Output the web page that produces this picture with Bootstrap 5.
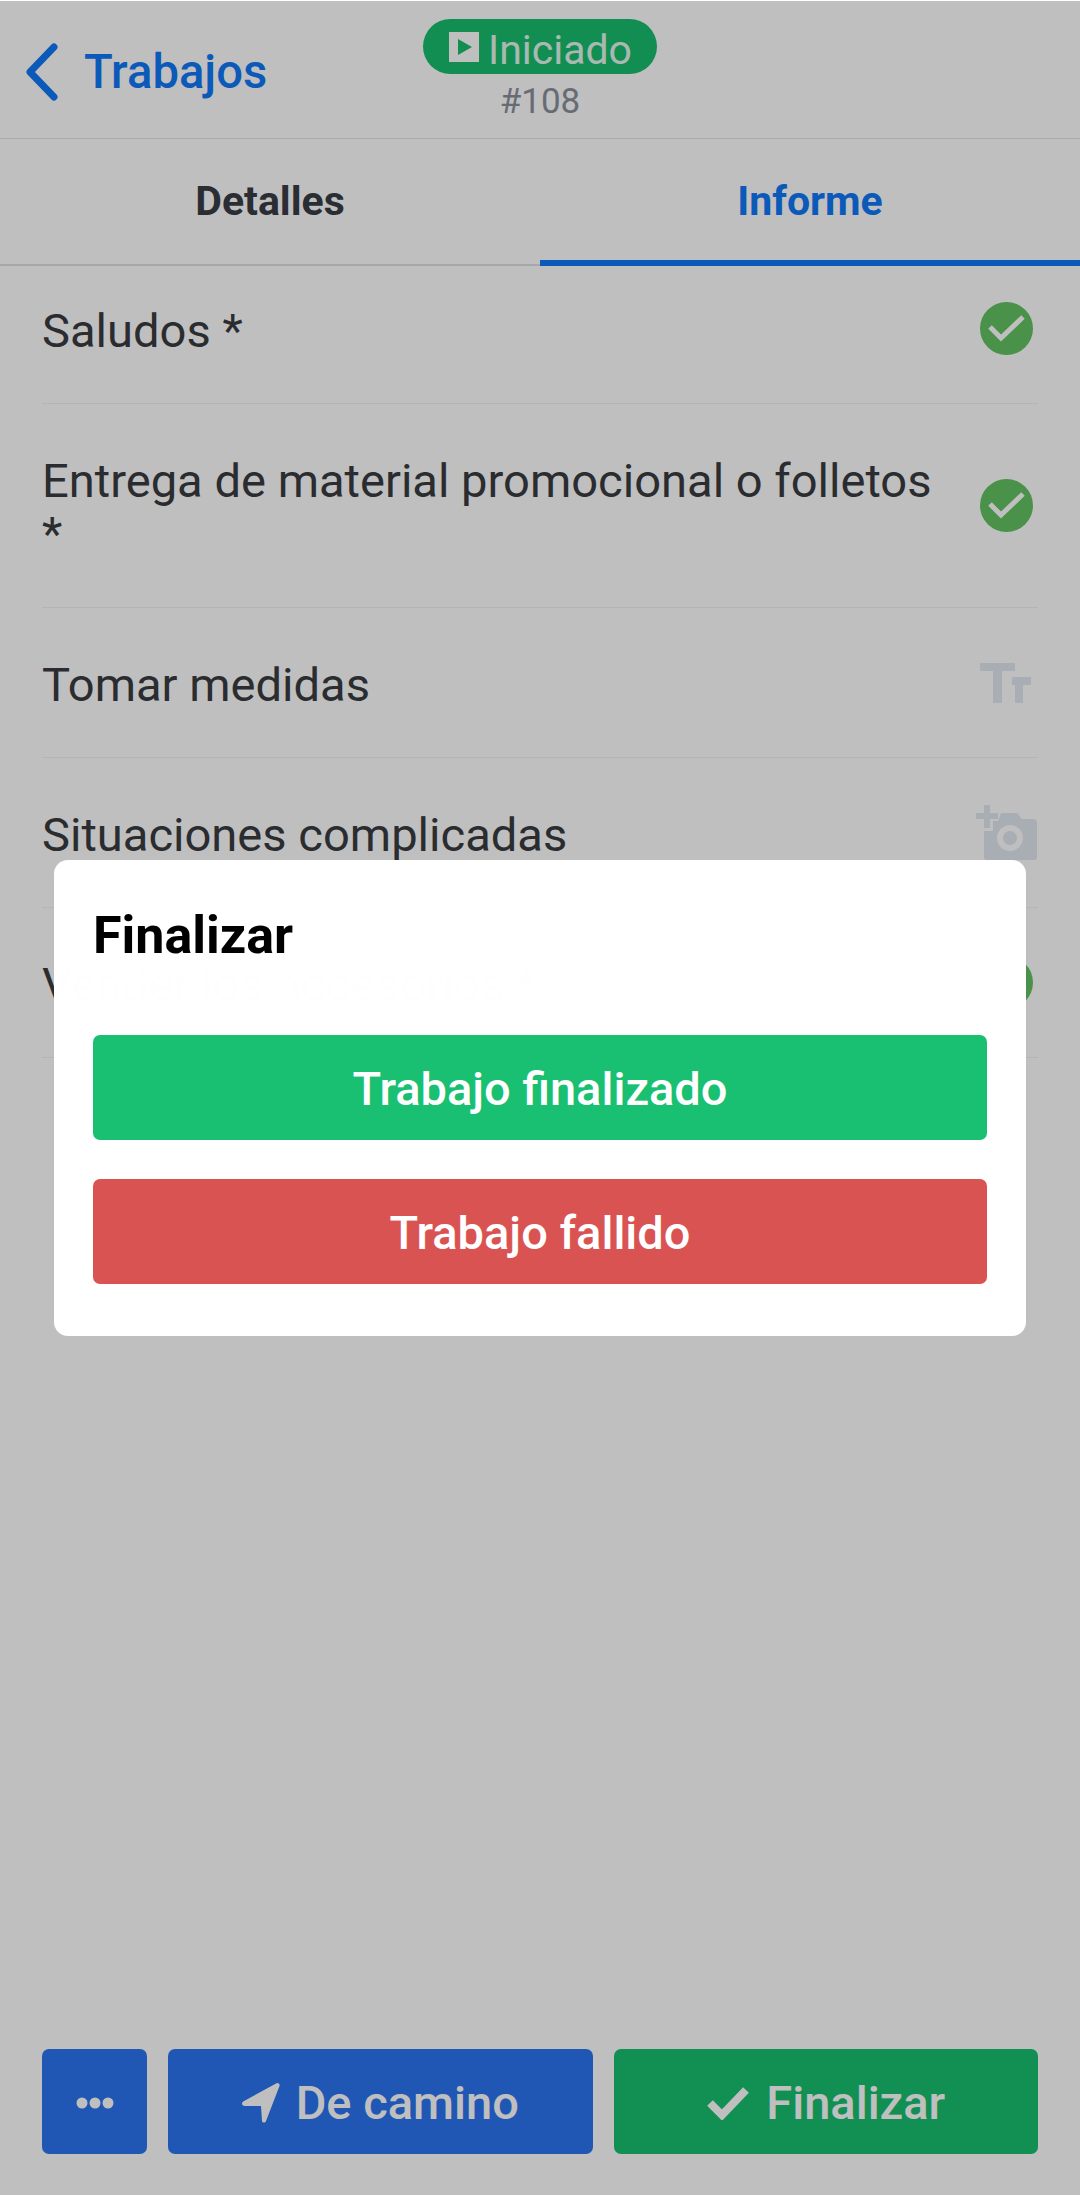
<!DOCTYPE html>
<html lang="es">
<head>
<meta charset="utf-8">
<title>Trabajo #108</title>
<link rel="stylesheet" href="https://cdn.jsdelivr.net/npm/bootstrap@5.3.0/dist/css/bootstrap.min.css">
<style>
html,body{height:100%;margin:0}
body{font-family:Roboto,"Liberation Sans",sans-serif;background:#fff;color:#383b40;width:1080px;height:2195px;overflow:hidden}
.app-page{height:2195px;position:relative}
.app-top{height:139px;border-bottom:1px solid #e3e5e8;padding:0 25px;position:relative}
.back-link{color:#0f78f8;font-size:47.200px;font-weight:500;text-decoration:none;line-height:54px;gap:26px;padding-top:43px}
.back-link span{margin-top:2px}
.head-center{position:absolute;left:0;right:0;top:19px}
.state-pill{background:#19be6f;color:rgba(255,255,255,.9);border-radius:28px;height:55px;width:234px;font-size:41px;line-height:55px;gap:9px;padding-left:26px}
.state-pill span{margin-top:8px}
.job-num{color:#8a919b;font-size:35px;line-height:40px;margin-top:8px}
.tab-row{height:127px;border-bottom:2px solid #dee2e6;position:relative}
.tab-item{width:540px;height:127px;font-size:41px;font-weight:700;line-height:40px;padding-top:42px;text-align:center;color:#383c44;text-decoration:none}
.tab-item.is-on{color:#0f78f8;border-bottom:6px solid #0f78f8}
.field-list{padding:0 42px}
.field-row{border-bottom:1px solid #eef0f2;font-size:47.100px;line-height:53px;gap:42px}
.field-text{padding-top:3px}
.field-ico{width:64px;flex:0 0 64px}
.field-ico svg{flex:none}
.row-a{height:138px;padding-bottom:12px}
.row-b{height:204px}
.row-c{height:150px}
.back-shade{position:absolute;inset:1px 0 0 0;background:rgba(0,0,0,.25)}
.end-dialog{position:absolute;left:54px;top:860px;width:972px;height:476px;border:0;border-radius:14px;padding:0 39px;background:rgba(255,255,255,.996)}
.end-title{font-size:52px;font-weight:700;color:#000;line-height:56px;margin:48px 0 0}
.end-btn{height:105px;border:0;border-radius:7px;color:#fff;font-size:47px;font-weight:500;line-height:1;width:100%;padding-top:2px}
.end-ok{background:#1ac071;margin-top:71px}
.end-bad{background:#da5353;margin-top:39px}
.foot-bar{position:absolute;left:42px;right:42px;top:2049px;gap:21px}
.foot-btn{height:105px;border:0;border-radius:7px;color:#fff;font-size:47px;font-weight:500;gap:16px;line-height:1;padding:2px 0 0}
.foot-wide{flex:1 1 0}
.foot-blue{background:#2c75f0}
.foot-green{background:#18bf6f}
</style>
</head>
<body>
<div class="app-page">
  <header class="app-top">
    <a class="back-link d-inline-flex align-items-start" href="#">
      <svg width="33" height="58" viewBox="0 0 33 58"><path d="M29 4 5 29l24 25" fill="none" stroke="#0f78f8" stroke-width="7" stroke-linecap="round" stroke-linejoin="round"/></svg>
      <span>Trabajos</span>
    </a>
    <div class="head-center d-flex flex-column align-items-center">
      <span class="state-pill d-flex align-items-center">
        <svg width="30" height="30" viewBox="0 0 30 30"><path fill="#fff" fill-rule="evenodd" d="M0 0h30v30H0zM9 7v16l14-8z"/></svg>
        <span>Iniciado</span>
      </span>
      <span class="job-num">#108</span>
    </div>
  </header>
  <nav class="tab-row d-flex">
    <a class="tab-item" href="#">Detalles</a>
    <a class="tab-item is-on" href="#">Informe</a>
  </nav>
  <main class="field-list">
    <div class="field-row row-a d-flex align-items-center justify-content-between">
      <span class="field-text">Saludos *</span>
      <span class="field-ico d-flex justify-content-center"><svg width="53" height="53" viewBox="0 0 53 53"><circle cx="26.500" cy="26.500" r="26.500" fill="#63c263"/><path d="M10 25l11 11 22-21" fill="none" stroke="#fff" stroke-width="5"/></svg></span>
    </div>
    <div class="field-row row-b d-flex align-items-center justify-content-between">
      <span class="field-text">Entrega de material promocional o folletos *</span>
      <span class="field-ico d-flex justify-content-center"><svg width="53" height="53" viewBox="0 0 53 53"><circle cx="26.500" cy="26.500" r="26.500" fill="#63c263"/><path d="M10 25l11 11 22-21" fill="none" stroke="#fff" stroke-width="5"/></svg></span>
    </div>
    <div class="field-row row-c d-flex align-items-center justify-content-between">
      <span class="field-text">Tomar medidas</span>
      <span class="field-ico d-flex justify-content-center"><svg width="52" height="40" viewBox="0 0 52 40"><path fill="#e2e8f0" d="M0 0h35v8H22v32H13V8H0zM32 14h19v8h-8v18h-8V22h-3z"/></svg></span>
    </div>
    <div class="field-row row-c d-flex align-items-center justify-content-between">
      <span class="field-text">Situaciones complicadas</span>
      <span class="field-ico d-flex justify-content-center"><svg width="61" height="55" viewBox="0 0 61 55"><path fill="#e2e8f0" d="M8 0h6v8h8v6h-8v9H8v-9H0V8h8z"/><path fill="#e2e8f0" fill-rule="evenodd" d="M8 26h9V16h5l3-8h16l5 6h11q4 0 4 4v34q0 3-3 3H11q-3 0-3-3zM34 20a13 13 0 1 0 .01 0zM34 26a7 7 0 1 1-.01 0z"/></svg></span>
    </div>
    <div class="field-row row-c d-flex align-items-center justify-content-between">
      <span class="field-text">Vender los accesorios *</span>
      <span class="field-ico d-flex justify-content-center"><svg width="53" height="53" viewBox="0 0 53 53"><circle cx="26.500" cy="26.500" r="26.500" fill="#63c263"/></svg></span>
    </div>
  </main>
  <div class="foot-bar d-flex">
    <button class="foot-btn foot-blue d-flex align-items-center justify-content-center" type="button" style="width:105px"><svg width="38" height="12" viewBox="0 0 38 12"><circle cx="6" cy="6" r="5.500" fill="#fff"/><circle cx="19" cy="6" r="5.500" fill="#fff"/><circle cx="32" cy="6" r="5.500" fill="#fff"/></svg></button>
    <button class="foot-btn foot-blue foot-wide d-flex align-items-center justify-content-center" type="button"><svg width="38" height="40" viewBox="0 0 38 40"><path fill="#fff" d="M35 0c2 0 3 1 2.500 3L24 38c-.7 2-3.500 2-4 0l-1-15H3c-3 0-4-3-1.800-4.500z"/></svg><span>De camino</span></button>
    <button class="foot-btn foot-green foot-wide d-flex align-items-center justify-content-center" type="button"><svg width="44" height="34" viewBox="0 0 44 34"><path d="M4 17l12 12L40 4" fill="none" stroke="#fff" stroke-width="8"/></svg><span>Finalizar</span></button>
  </div>
  <div class="back-shade"></div>
  <div class="modal-content end-dialog">
    <h2 class="end-title">Finalizar</h2>
    <button class="end-btn end-ok d-block" type="button">Trabajo finalizado</button>
    <button class="end-btn end-bad d-block" type="button">Trabajo fallido</button>
  </div>
</div>
<script src="https://cdn.jsdelivr.net/npm/bootstrap@5.3.0/dist/js/bootstrap.bundle.min.js"></script>
</body>
</html>
